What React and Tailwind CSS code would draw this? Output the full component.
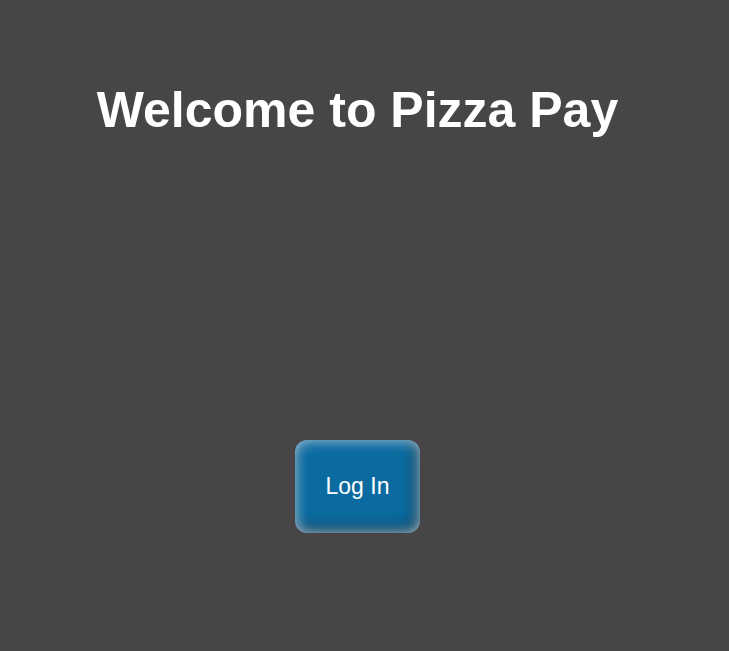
export default function App() {
  return (
    <div className="min-h-[651px] w-full bg-[#474546] font-['Liberation_Sans',Arial,sans-serif] pr-[14px]">
      <div className="flex flex-col items-center">
        <h1 className="mt-[80px] text-[50px] font-bold leading-[60px] text-white">Welcome to Pizza Pay</h1>
        <button className="mt-[300px] flex h-[93px] w-[125px] items-center justify-center rounded-[12px] bg-[#0b6a9f] text-[23px] text-white shadow-[inset_0_0_14px_rgba(230,240,250,0.8),inset_-5px_-6px_14px_rgba(0,0,0,0.5)]">
          Log In
        </button>
      </div>
    </div>
  );
}
